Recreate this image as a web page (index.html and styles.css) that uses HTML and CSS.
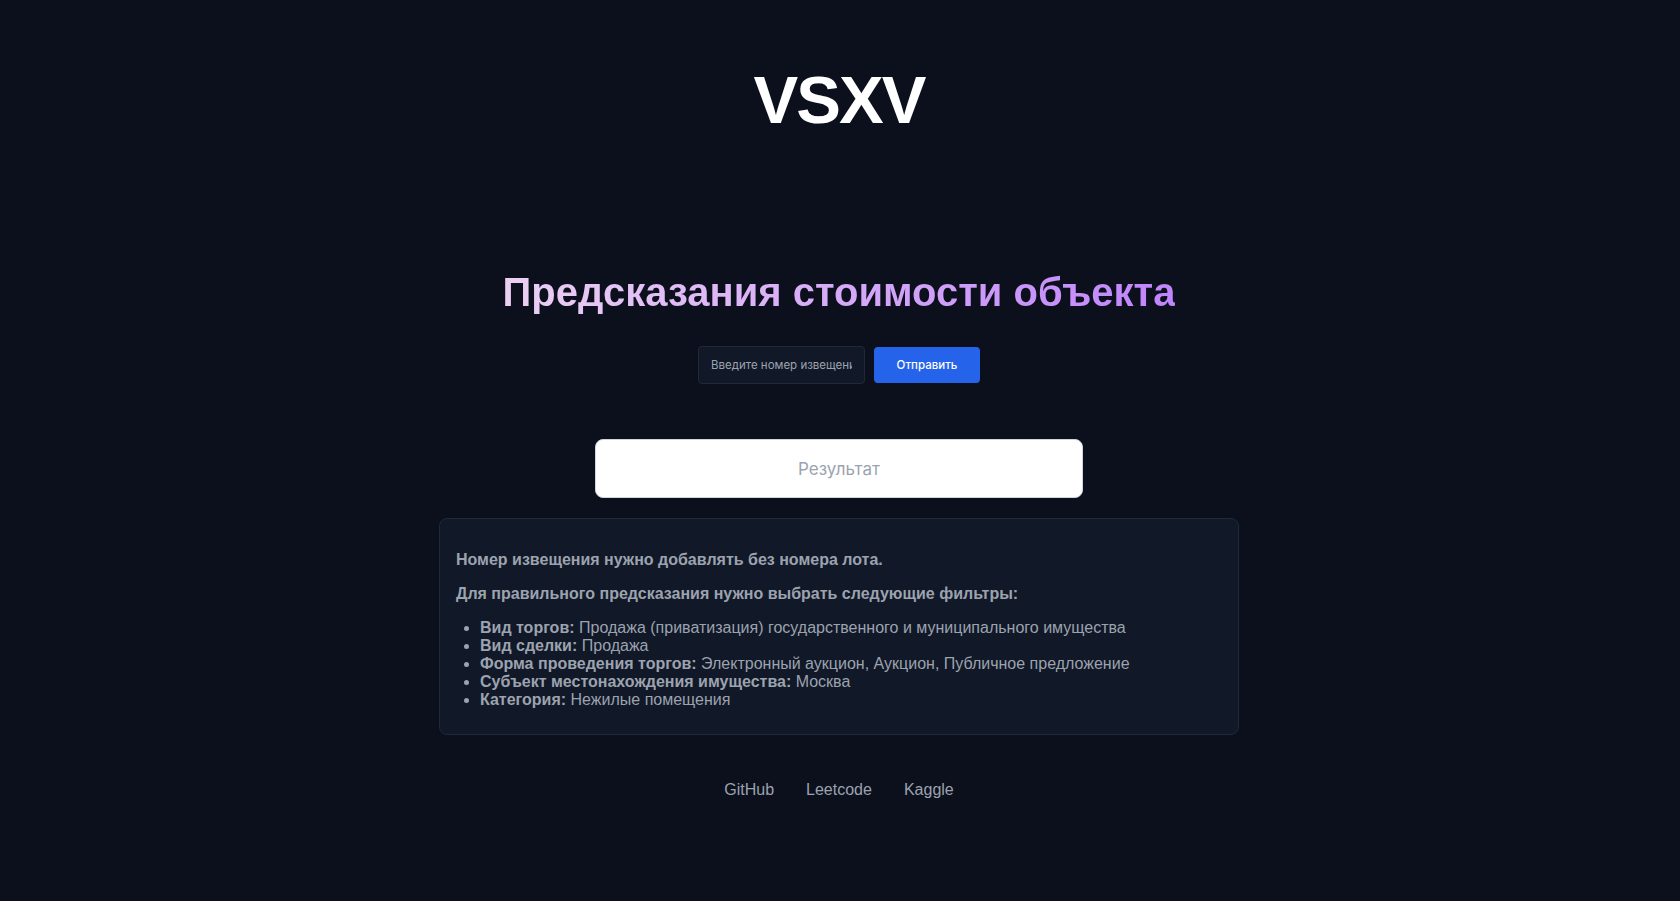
FILE: index.html
```html
<!DOCTYPE html>
<html lang="ru">
<head>
<meta charset="utf-8">
<title>VSXV</title>
<link rel="stylesheet" href="styles.css">
</head>
<body>
<main class="page">
  <h1 class="logo">VSXV</h1>
  <h2 class="title">Предсказания стоимости объекта</h2>
  <form class="form">
    <input class="field" type="text" placeholder="Введите номер извещения">
    <button class="submit" type="button">Отправить</button>
  </form>
  <div class="result">Результат</div>
  <section class="card">
    <p>Номер извещения нужно добавлять без номера лота.</p>
    <p>Для правильного предсказания нужно выбрать следующие фильтры:</p>
    <ul class="filters">
      <li><b>Вид торгов:</b> Продажа (приватизация) государственного и муниципального имущества</li>
      <li><b>Вид сделки:</b> Продажа</li>
      <li><b>Форма проведения торгов:</b> Электронный аукцион, Аукцион, Публичное предложение</li>
      <li><b>Субъект местонахождения имущества:</b> Москва</li>
      <li><b>Категория:</b> Нежилые помещения</li>
    </ul>
  </section>
  <nav class="links">
    <a href="#">GitHub</a>
    <a href="#">Leetcode</a>
    <a href="#">Kaggle</a>
  </nav>
</main>
</body>
</html>
```
FILE: styles.css
```css
html, body {
  margin: 0;
  padding: 0;
  background: #0b101c;
  min-height: 100%;
}

body {
  font-family: "Liberation Sans", Arial, sans-serif;
  color: #9ca3af;
}

.page {
  display: flex;
  flex-direction: column;
  align-items: center;
  padding-top: 66px;
  padding-right: 2px;
}

.logo {
  margin: 0;
  font-size: 67px;
  line-height: 67px;
  font-weight: 700;
  letter-spacing: -2px;
  color: #ffffff;
}

.title {
  margin: 135px 0 0;
  font-size: 40px;
  line-height: 48px;
  font-weight: 700;
  background: linear-gradient(to right, #ebd0f3, #c084fc);
  -webkit-background-clip: text;
  background-clip: text;
  color: transparent;
}

.form {
  margin: 30px 0 0;
  display: flex;
  align-items: center;
  gap: 9px;
}

.field {
  box-sizing: border-box;
  width: 167px;
  height: 38px;
  padding: 0 12px;
  background: #111827;
  border: 1px solid #1f2937;
  border-radius: 4px;
  font-family: Inter, "Noto Sans", sans-serif;
  font-size: 11.5px;
  color: #e5e7eb;
  outline: none;
}

.field::placeholder {
  color: #9ca3af;
}

.submit {
  box-sizing: border-box;
  width: 106px;
  height: 36px;
  padding: 0;
  background: #2563eb;
  border: none;
  border-radius: 4px;
  font-family: Inter, "Noto Sans", sans-serif;
  font-size: 11.5px;
  font-weight: 500;
  color: #ffffff;
}

.result {
  box-sizing: border-box;
  margin-top: 55px;
  width: 488px;
  height: 59px;
  display: flex;
  align-items: center;
  justify-content: center;
  background: #ffffff;
  border: 1px solid #d1d5db;
  border-radius: 8px;
  font-family: Inter, "Noto Sans", sans-serif;
  font-size: 17px;
  color: #9ca3af;
}

.card {
  box-sizing: border-box;
  margin-top: 20px;
  width: 800px;
  padding: 16px 16px 9px;
  background: #111827;
  border: 1px solid #1f2937;
  border-radius: 8px;
  font-size: 16px;
  color: #9ca3af;
}

.card p {
  margin: 16px 0;
  font-weight: 700;
}

.filters {
  margin: 16px 0;
  padding-left: 24px;
  line-height: 18px;
}

.filters b {
  font-weight: 700;
}

.links {
  margin-top: 43px;
  display: flex;
  gap: 32px;
  line-height: 24px;
}

.links a {
  font-size: 16px;
  color: #9ca3af;
  text-decoration: none;
}
```
